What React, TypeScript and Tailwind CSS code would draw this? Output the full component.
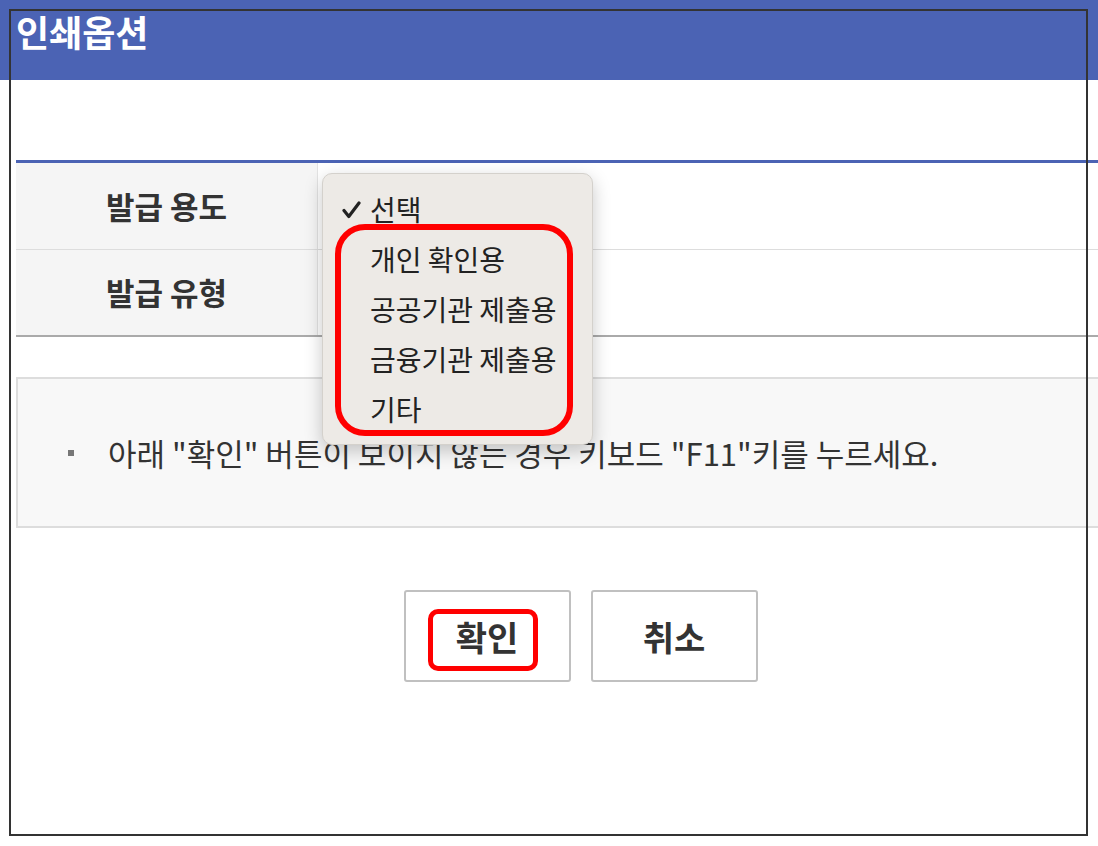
import React from "react";

const font = { fontFamily: '"Noto Sans CJK KR", "Noto Sans", sans-serif' };

const options = ["개인 확인용", "공공기관 제출용", "금융기관 제출용", "기타"];

function Check() {
  return (
    <svg width="19" height="18" viewBox="0 0 19 18" className="absolute left-[19px] top-[17px]">
      <path d="M2 9.5 L6.8 15.5 L17 2" fill="none" stroke="#222" strokeWidth="3.2" strokeLinecap="round" strokeLinejoin="round" />
    </svg>
  );
}

export default function App() {
  return (
    <div className="relative h-[846px] w-[1098px] overflow-hidden bg-white text-[#333]" style={font}>
      {/* header */}
      <div className="h-[80px] w-full bg-[#4b63b4] pl-[16px] pt-[9px]">
        <h1 className="text-[36px] font-bold leading-[44px] text-white">인쇄옵션</h1>
      </div>

      {/* body */}
      <div className="ml-[16px] w-[1129px] pt-[80px]">
        <div className="border-t-[3px] border-[#4b63b4]">
          <div className="flex h-[87px] border-b border-[#dddddd]">
            <div className="flex w-[302px] items-center justify-center border-r border-[#e3e3e3] bg-[#f5f5f5] text-[31px] font-bold">
              발급 용도
            </div>
            <div className="flex-1" />
          </div>
          <div className="flex h-[87px] border-b-2 border-[#aaaaaa]">
            <div className="flex w-[302px] items-center justify-center border-r border-[#e3e3e3] bg-[#f5f5f5] text-[31px] font-bold">
              발급 유형
            </div>
            <div className="flex-1" />
          </div>
        </div>

        <div className="mt-[40px] flex h-[151px] items-center border-2 border-[#dddddd] bg-[#f8f8f8]">
          <span className="ml-[50px] h-[6px] w-[6px] bg-[#777]" />
          <p className="ml-[34px] text-[31px] leading-[36px] text-[#333]">
            아래 "확인" 버튼이 보이지 않는 경우 키보드 "F11"키를 누르세요.
          </p>
        </div>

        <div className="mt-[62px] flex justify-center gap-[20px]">
          <button className="h-[92px] w-[167px] rounded-[3px] border-2 border-[#c0c0c0] bg-white text-[34px] font-bold text-[#333]">
            확인
          </button>
          <button className="h-[92px] w-[167px] rounded-[3px] border-2 border-[#c0c0c0] bg-white text-[34px] font-bold text-[#333]">
            취소
          </button>
        </div>
      </div>

      {/* open select menu */}
      <div className="absolute left-[322px] top-[173px] w-[271px] rounded-[10px] border border-[#d4d1cc] bg-[#edeae6] py-[10px] shadow-[0_6px_18px_rgba(0,0,0,0.22)]">
        <div className="relative flex h-[50px] items-center pl-[47px] text-[28px] text-[#222]">
          <Check />
          선택
        </div>
        {options.map((o) => (
          <div key={o} className="flex h-[50px] items-center pl-[47px] text-[28px] text-[#222]">
            {o}
          </div>
        ))}
      </div>

      {/* annotations */}
      <div className="pointer-events-none absolute left-[335px] top-[224px] h-[212px] w-[238px] rounded-[30px] border-[6px] border-[#ff0000]" />
      <div className="pointer-events-none absolute left-[428px] top-[609px] h-[62px] w-[110px] rounded-[10px] border-[5px] border-[#ff0000]" />
      <div className="pointer-events-none absolute left-[9px] top-[9px] h-[827px] w-[1079px] border-2 border-[#333]" />
    </div>
  );
}
